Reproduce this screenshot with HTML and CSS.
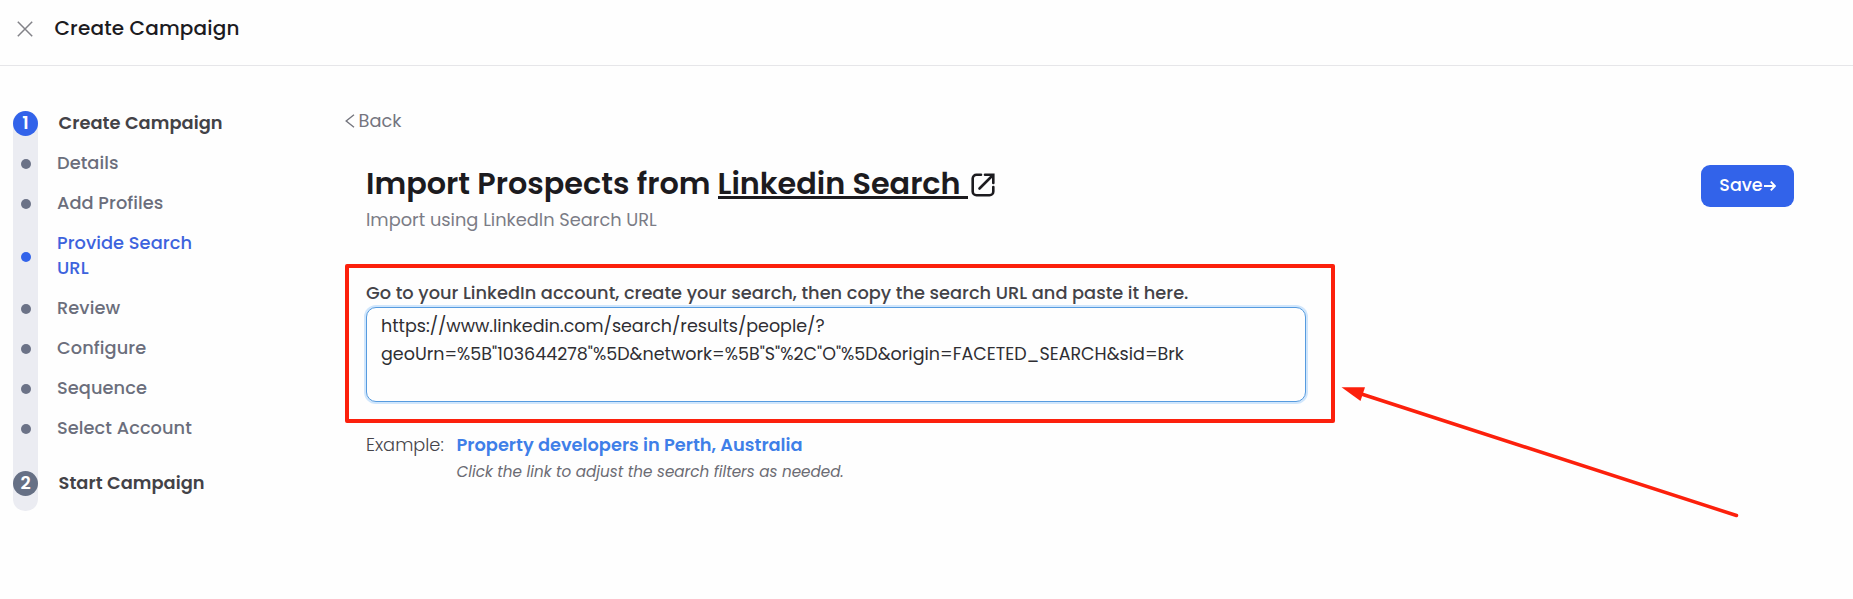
FILE: index.html
```html
<!DOCTYPE html>
<html lang="en">
<head>
    <meta charset="UTF-8">
    <meta name="viewport" content="width=device-width, initial-scale=1.0">
    <title>Create Campaign</title>
    <link rel="stylesheet" href="styles.css">
</head>
<body>

<header class="topbar">
    <svg class="close-icon" viewBox="0 0 16 16" width="16" height="16">
        <path d="M0.8 0.8L15.2 15.2M15.2 0.8L0.8 15.2" />
    </svg>
    <h1 class="topbar-title">Create Campaign</h1>
</header>

<div class="layout">
    <!-- Step list -->
    <nav class="steps">
        <div class="step-head"><span class="step-number active">1</span><span class="step-title">Create Campaign</span></div>
        <ul class="step-list">
            <li><span class="dot"></span><span class="step-label">Details</span></li>
            <li><span class="dot"></span><span class="step-label">Add Profiles</span></li>
            <li class="current"><span class="dot"></span><span class="step-label">Provide Search<br>URL</span></li>
            <li><span class="dot"></span><span class="step-label">Review</span></li>
            <li><span class="dot"></span><span class="step-label">Configure</span></li>
            <li><span class="dot"></span><span class="step-label">Sequence</span></li>
            <li><span class="dot"></span><span class="step-label">Select Account</span></li>
        </ul>
        <div class="step-head"><span class="step-number">2</span><span class="step-title">Start Campaign</span></div>
    </nav>

    <main class="content">
        <a class="back">
            <svg viewBox="0 0 10 14" width="10" height="14"><path d="M9 0.8L1.2 7L9 13.2" /></svg>
            <span>Back</span>
        </a>

        <div class="heading-row">
            <div>
                <h2 class="heading">
                    <span class="heading-text">Import Prospects from</span>
                    <a class="heading-link">Linkedin Search</a>
                    <svg class="open-icon" viewBox="0 0 24 24" width="24" height="24">
                        <path d="M10 1.7H5.5A3.8 3.8 0 0 0 1.7 5.5V18.5A3.8 3.8 0 0 0 5.5 22.3H18.5A3.8 3.8 0 0 0 22.3 18.5V14" />
                        <path d="M14 1.7H22.3V10M22 2L8.5 15.5" />
                    </svg>
                </h2>
                <p class="subheading">Import using LinkedIn Search URL</p>
            </div>
            <button class="save">
                <span>Save</span>
                <svg viewBox="0 0 12 12" width="12" height="12"><path d="M0 6H11M6.8 1.6L11 6L6.8 10.4" /></svg>
            </button>
        </div>

        <div class="highlight">
            <label class="url-label" for="search-url">Go to your LinkedIn account, create your search, then copy the search URL and paste it here.</label>
            <textarea class="url-input" id="search-url" spellcheck="false">https://www.linkedin.com/search/results/people/?
geoUrn=%5B"103644278"%5D&amp;network=%5B"S"%2C"O"%5D&amp;origin=FACETED_SEARCH&amp;sid=Brk</textarea>
        </div>

        <div class="example">
            <span class="example-label">Example:</span>
            <div>
                <a class="example-link">Property developers in Perth, Australia</a>
                <p class="example-hint">Click the link to adjust the search filters as needed.</p>
            </div>
        </div>
    </main>
</div>

<!-- Arrow pointing at the search URL box -->
<svg class="arrow" viewBox="0 0 400 134" width="400" height="134">
    <path class="arrow-line" d="M22 9.5L395.5 130.5" />
    <path class="arrow-head" d="M0.5 2.2H24L19.5 16Z" />
</svg>

</body>
</html>
```
FILE: styles.css
```css
* {
    box-sizing: border-box;
}
body {
    font-family: Poppins, Inter, sans-serif;
    font-size: 17.8px;
    line-height: 25px;
    color: #1c1b1f;
    background-color: #fefefe;
    margin: 0;
    height: 599px;
    overflow: hidden;
}
h1, h2, p, ul {
    margin: 0;
    padding: 0;
}
svg {
    display: block;
    flex: none;
    fill: none;
    stroke: currentColor;
}
.topbar {
    display: flex;
    align-items: center;
    gap: 21.5px;
    height: 66px;
    padding: 0 17px 8px;
    border-bottom: 1px solid #e6e6e9;
}
.close-icon {
    color: #828288;
    stroke-width: 1.5;
}
.topbar-title {
    font-size: 20px;
    font-weight: 500;
    letter-spacing: 0.15px;
}
.layout {
    display: flex;
}
/* Steps, the labels run out of the narrow rail */
.steps {
    width: 25px;
    height: 400px;
    margin: 45px 307px 0 13px;
    background-color: #ebecf2;
    border-radius: 12px;
    white-space: nowrap;
}
.step-head {
    display: flex;
    align-items: center;
    gap: 20.5px;
}
.step-number {
    flex: none;
    width: 25px;
    height: 25px;
    border-radius: 50%;
    background-color: #667085;
    color: white;
    font-weight: 600;
    line-height: 24px;
    text-align: center;
}
.step-number.active {
    background-color: #3263ea;
}
.step-title {
    font-weight: 600;
    color: #434247;
    letter-spacing: 0.06px;
}
.step-title, .step-label {
    margin: -1px 0 1px;
}
.step-list {
    list-style-type: none;
    display: flex;
    flex-direction: column;
    gap: 15px;
    padding: 15px 0 30px 8px;
    color: #6b6e7c;
    font-weight: 500;
    letter-spacing: 0.06px;
}
.step-list li {
    display: flex;
    align-items: center;
    gap: 26px;
}
.dot {
    flex: none;
    width: 10px;
    height: 10px;
    margin-top: 1px;
    border-radius: 50%;
    background-color: #6b7287;
}
.current {
    color: #3d63dd;
}
.current .dot {
    margin-top: 2px;
    background-color: #3263ea;
}
/* Content */
.content {
    flex: 1;
    padding: 42px 59px 0 0;
}
.back {
    display: flex;
    align-items: center;
    gap: 4px;
    margin-left: -0.5px;
    color: #74757e;
}
.back svg {
    margin-top: 1px;
    stroke-width: 1.4;
}
.heading-row {
    display: flex;
    justify-content: space-between;
    padding: 32px 0 0 21px;
}
.heading {
    display: flex;
    font-size: 30.3px;
    font-weight: 600;
    line-height: 38px;
}
.heading-text {
    width: 351.5px;
}
.heading-link {
    width: 250.5px;
    height: 34px;
    border-bottom: 3px solid #1c1b1f;
    white-space: nowrap;
}
.open-icon {
    margin: 8px 0 0 3px;
    stroke-width: 2.6;
    stroke-linecap: round;
}
.subheading {
    margin: 4px 0 1px;
    color: #7b7c86;
}
.save {
    display: flex;
    align-items: center;
    justify-content: center;
    gap: 1px;
    width: 93px;
    height: 42px;
    padding: 0 0 2px;
    border: none;
    border-radius: 9px;
    background-color: #3263ea;
    color: white;
    font: 500 17.5px Poppins, Inter, sans-serif;
}
.save svg {
    margin-top: 1px;
    stroke-width: 1.9;
}
.highlight {
    width: 990px;
    height: 159px;
    margin-top: 31px;
    padding: 12px 0 0 17px;
    border: 4px solid #fc200c;
    border-radius: 2px;
}
.url-label {
    display: block;
    font-weight: 500;
    color: #444348;
}
.url-input {
    display: block;
    width: 940px;
    height: 95px;
    margin-top: 2px;
    padding: 4px 14px;
    border: 1px solid #569bdf;
    border-radius: 10px;
    outline: none;
    resize: none;
    background-color: #fefefe;
    box-shadow: 0 0 0 2px #d0e6fc;
    color: #2f2e33;
    font: 17.5px/28px Poppins, Inter, sans-serif;
}
.example {
    display: flex;
    padding: 9px 0 0 21px;
}
.example-label {
    width: 90.5px;
    color: #45444a;
    font-weight: 300;
}
.example-link {
    color: #3f7fe8;
    font-weight: 600;
}
.example-hint {
    font-size: 15.2px;
    font-style: italic;
    color: #6b6b73;
    margin-top: 2px;
}
.arrow {
    position: absolute;
    left: 1341px;
    top: 385px;
}
.arrow-line {
    stroke: #fc200c;
    stroke-width: 3.5;
    stroke-linecap: round;
}
.arrow-head {
    fill: #fc200c;
    stroke: none;
}
```
